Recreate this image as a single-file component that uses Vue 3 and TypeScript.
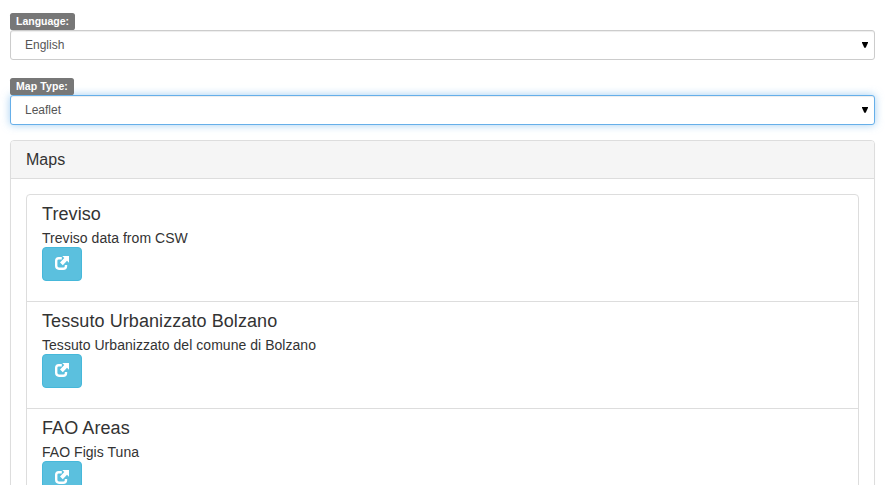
<script setup lang="ts">
import { ref } from 'vue'

interface MapEntry {
  id: number
  title: string
  description: string
}

const language = ref('English')
const mapType = ref('Leaflet')
const languages: string[] = ['English', 'Italiano']
const mapTypes: string[] = ['Leaflet', 'OpenLayers']

const maps: MapEntry[] = [
  { id: 1, title: 'Treviso', description: 'Treviso data from CSW' },
  { id: 2, title: 'Tessuto Urbanizzato Bolzano', description: 'Tessuto Urbanizzato del comune di Bolzano' },
  { id: 3, title: 'FAO Areas', description: 'FAO Figis Tuna' },
]
</script>

<template>
  <main class="page">
    <div class="field">
      <label class="tag" for="language">Language:</label>
      <div class="control">
        <select id="language" v-model="language" class="select">
          <option v-for="l in languages" :key="l">{{ l }}</option>
        </select>
        <svg class="caret" viewBox="0 0 6 6"><path d="M0 0h6v.8L3.7 5.8H2.3L0 .8z" /></svg>
      </div>
    </div>
    <div class="field">
      <label class="tag wide" for="map-type">Map Type:</label>
      <div class="control">
        <select id="map-type" v-model="mapType" class="select active">
          <option v-for="t in mapTypes" :key="t">{{ t }}</option>
        </select>
        <svg class="caret" viewBox="0 0 6 6"><path d="M0 0h6v.8L3.7 5.8H2.3L0 .8z" /></svg>
      </div>
    </div>

    <section class="panel">
      <header class="panel-heading">Maps</header>
      <div class="panel-body">
        <ul class="list">
          <li v-for="m in maps" :key="m.id" class="item">
            <h4 class="title">{{ m.title }}</h4>
            <div class="description">{{ m.description }}</div>
            <button class="open" type="button" aria-label="Open map">
              <svg class="icon" viewBox="0 0 16 15">
                <path class="frame" d="M7.8 2.2H4.7Q2.2 2.2 2.2 4.7v5.1q0 2.9 2.8 2.9h4.2q2.8 0 2.8-2.7V9" />
                <path class="arrow" d="M8.2 0H15v6.7l-2-1.9-4.2 4.4-2.8-2.8 4.3-4.3z" />
              </svg>
            </button>
          </li>
        </ul>
      </div>
    </section>
  </main>
</template>

<style>
body {
  margin: 0;
  background: #fff;
  overflow: hidden;
}
</style>

<style scoped>
* {
  box-sizing: border-box;
}
.page {
  height: 485px;
  overflow: hidden;
  padding: 13px 10px 0;
  font: 14px/20px "Liberation Sans", Arial, sans-serif;
  color: #333;
}
.field {
  display: flex;
  flex-direction: column;
  align-items: flex-start;
  margin-bottom: 18px;
}
.field + .panel {
  margin-top: -3px;
}
.tag {
  position: relative;
  z-index: 1;
  height: 17px;
  padding: 3px 6px 0;
  border-radius: 2.6px;
  background: #777;
  color: #fff;
  font-size: 10.5px;
  font-weight: bold;
  line-height: 11px;
  white-space: nowrap;
}
.tag.wide {
  letter-spacing: 0.09px;
}
.control {
  position: relative;
  width: 100%;
  height: 30px;
}
.select {
  display: block;
  appearance: none;
  width: 100%;
  height: 30px;
  padding: 5px 14px;
  border: 1px solid #ccc;
  border-radius: 3px;
  outline: 0;
  background: #fff;
  color: #555;
  font: 12px/18px "Liberation Sans", Arial, sans-serif;
  box-shadow: inset 0 1px 1px rgba(0, 0, 0, 0.075);
}
.select.active {
  border-color: #66afe9;
  box-shadow: inset 0 1px 1px rgba(0, 0, 0, 0.075), 0 0 8px rgba(102, 175, 233, 0.6);
}
.caret {
  position: absolute;
  top: 12px;
  right: 7px;
  width: 6px;
  height: 6px;
  pointer-events: none;
}
.panel {
  border: 1px solid #ddd;
  border-radius: 4px;
  box-shadow: 0 1px 1px rgba(0, 0, 0, 0.05);
}
.panel-heading {
  height: 38px;
  padding: 10px 15px;
  border-bottom: 1px solid #ddd;
  border-radius: 3px 3px 0 0;
  background: #f5f5f5;
  font-size: 16px;
  line-height: 17px;
}
.panel-body {
  padding: 15px;
}
.list {
  margin: 0;
  padding: 0;
  border: 1px solid #ddd;
  border-radius: 4px;
  list-style: none;
}
.item {
  height: 107px;
  padding: 9px 15px 0;
  border-bottom: 1px solid #ddd;
}
.item:last-child {
  border-bottom: 0;
}
.title {
  margin: 0 0 4px;
  font-size: 18px;
  font-weight: 500;
  line-height: 20px;
  letter-spacing: 0.08px;
}
.description {
  height: 19px;
  letter-spacing: 0.04px;
}
.open {
  display: flex;
  width: 40px;
  height: 34px;
  padding: 8px 0 0 11px;
  border: 1px solid #46b8da;
  border-radius: 4px;
  background: #5bc0de;
}
.icon {
  width: 16px;
  height: 15px;
}
.frame {
  fill: none;
  stroke: #fff;
  stroke-width: 2.4;
}
.arrow {
  fill: #fff;
}
</style>
